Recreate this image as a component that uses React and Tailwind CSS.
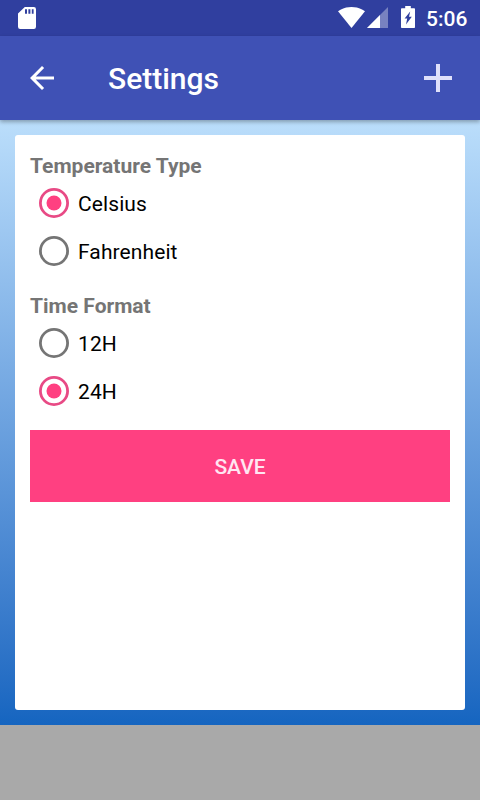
import { useState } from "react";

function StatusBar() {
    return (
        <div className="h-9 bg-[#303f9f] flex items-start justify-between pl-[18px] pr-3 text-white">
            {/* SD card */}
            <svg className="w-[18px] h-[22px] mt-[7px]" viewBox="0 0 18 22" fill="currentColor">
                <path fillRule="evenodd" d="M6.8 0H15.8A2.2 2.2 0 0 1 18 2.2V19.8A2.2 2.2 0 0 1 15.8 22H2.2A2.2 2.2 0 0 1 0 19.8V6.6ZM7 2.3V6.7H9V2.3ZM10.4 2.3V6.7H12.4V2.3ZM13.8 2.3V6.7H15.6V2.3Z" />
            </svg>

            <div className="flex items-start">
                {/* Wifi */}
                <svg className="w-[27px] h-[21px] mt-[7px]" viewBox="0 0 27 21" fill="currentColor">
                    <path d="M13.5 21L0 4.3C.6 3.8 5.7 0 13.5 0S26.4 3.8 27 4.3Z" />
                </svg>
                {/* Signal */}
                <svg className="w-[21px] h-[21px] mt-[7px] ml-[2px]" viewBox="0 0 21 21" fill="currentColor">
                    <path fillOpacity=".35" d="M0 21H21V0Z" />
                    <path d="M0 21H13V8Z" />
                </svg>
                {/* Battery */}
                <svg className="w-[14px] h-[22px] mt-[6px] ml-[13px]" viewBox="0 0 14 22" fill="currentColor">
                    <path fillRule="evenodd" d="M4.2 0H9.8V2.2H13.2Q14 2.2 14 3V21.2Q14 22 13.2 22H.8Q0 22 0 21.2V3Q0 2.2 .8 2.2H4.2ZM9.2 5.4L3.6 12.6H6.2L5 18.6L10.8 10.8H8Z" />
                </svg>
                <span className="mt-[7px] ml-[11px] w-[42px] text-[21px] leading-6 font-medium whitespace-nowrap">5:06</span>
            </div>
        </div>
    );
}

function Toolbar() {
    return (
        <header className="relative h-[84px] bg-[#3f51b5] flex items-center pl-6 pr-[18px] shadow-[0_2px_4px_rgba(0,0,0,0.3)]">
            <button type="button" aria-label="Back" className="text-white">
                <svg className="w-9 h-9" viewBox="0 0 24 24" fill="currentColor">
                    <path d="M20 11H7.83l5.59-5.59L12 4l-8 8 8 8 1.41-1.41L7.83 13H20v-2z" />
                </svg>
            </button>
            <h1 className="ml-12 pt-[2px] text-[30px] leading-9 font-medium text-white">Settings</h1>
            <button type="button" aria-label="Add" className="ml-auto text-[#dfe0fa]">
                <svg className="w-12 h-12" viewBox="0 0 24 24" fill="currentColor">
                    <path d="M19 13h-6v6h-2v-6H5v-2h6V5h2v6h6v2z" />
                </svg>
            </button>
        </header>
    );
}

function RadioIcon({ checked }) {
    return (
        <svg className="w-[30px] h-[30px]" viewBox="0 0 30 30">
            <circle cx="15" cy="15" r="13.6" fill="none" strokeWidth="2.8" stroke={checked ? "#e84a85" : "#757575"} />
            {checked && <circle cx="15" cy="15" r="7.5" fill="#ff4081" />}
        </svg>
    );
}

function RadioGroup({ label, options, value, onChange }) {
    return (
        <section>
            <h2 className="h-[29px] pt-[2px] text-[21px] leading-7 font-bold text-[#757575]">{label}</h2>
            {options.map((option) => (
                <button
                    key={option}
                    type="button"
                    role="radio"
                    aria-checked={option === value}
                    onClick={() => onChange(option)}
                    className="h-12 w-full flex items-center pl-[9px] gap-[9px] text-left"
                >
                    <RadioIcon checked={option === value} />
                    <span className="pt-[2px] text-[21px] leading-6 tracking-[0.1px] text-black">{option}</span>
                </button>
            ))}
        </section>
    );
}

export default function App() {
    const [temperature, setTemperature] = useState("Celsius");
    const [timeFormat, setTimeFormat] = useState("24H");

    return (
        <div className="w-[480px] h-[800px] overflow-hidden flex flex-col bg-[#a9a9a9] font-[Roboto,sans-serif]">
            <StatusBar />
            <Toolbar />

            <main className="h-[605px] p-[15px] bg-linear-to-b from-[#bbdefb] to-[#1565c0]">
                <div className="h-full bg-white rounded-[3px] p-[15px] flex flex-col gap-[15px]">
                    <RadioGroup
                        label="Temperature Type"
                        options={["Celsius", "Fahrenheit"]}
                        value={temperature}
                        onChange={setTemperature}
                    />
                    <RadioGroup
                        label="Time Format"
                        options={["12H", "24H"]}
                        value={timeFormat}
                        onChange={setTimeFormat}
                    />
                    <button type="button" className="h-[72px] pt-[3px] shrink-0 bg-[#ff4081] text-[21px] font-medium text-[#ffe6f2]">
                        SAVE
                    </button>
                </div>
            </main>
        </div>
    );
}
